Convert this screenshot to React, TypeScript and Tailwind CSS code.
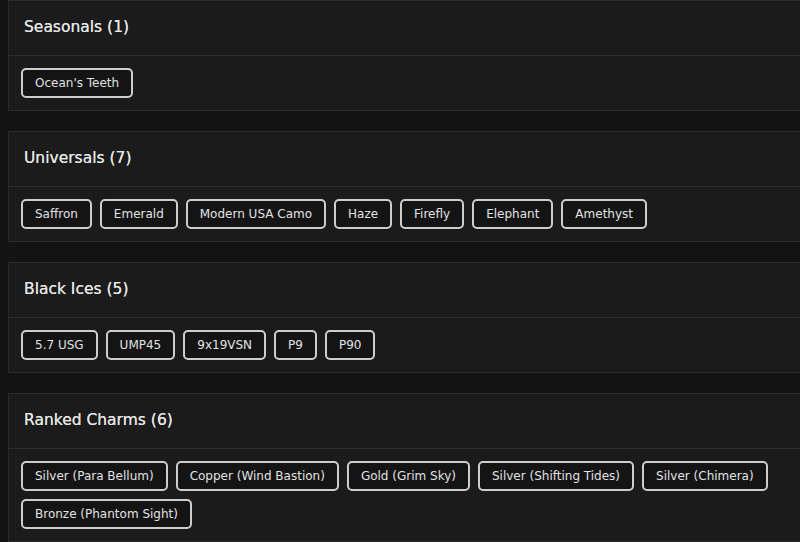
import React from 'react';

interface Group {
    title: string;
    items: string[];
}

const groups: Group[] = [
    { title: 'Seasonals', items: ["Ocean's Teeth"] },
    { title: 'Universals', items: ['Saffron', 'Emerald', 'Modern USA Camo', 'Haze', 'Firefly', 'Elephant', 'Amethyst'] },
    { title: 'Black Ices', items: ['5.7 USG', 'UMP45', '9x19VSN', 'P9', 'P90'] },
    {
        title: 'Ranked Charms',
        items: ['Silver (Para Bellum)', 'Copper (Wind Bastion)', 'Gold (Grim Sky)', 'Silver (Shifting Tides)', 'Silver (Chimera)', 'Bronze (Phantom Sight)'],
    },
];

const Card: React.FC<{ group: Group }> = ({ group }) => (
    <div className="w-[800px] bg-[#1b1b1b] border border-[#2b2b2b]">
        <div className="h-[55px] flex items-center px-[15px] border-b border-[#2e2e2e]">
            <h2 className="text-[15.5px] text-[#e6e6e6] [text-shadow:0_0_0.4px_#e6e6e6]">
                {group.title} ({group.items.length})
            </h2>
        </div>
        <div className="flex flex-wrap gap-x-[8px] gap-y-[8px] px-[12px] py-[12px]">
            {group.items.map(item => (
                <span
                    key={item}
                    className="h-[30px] flex items-center px-[12px] border-2 border-[#cdcdcd] rounded-[5px] bg-[#141414] text-[12px] text-[#e2e2e2]"
                >
                    {item}
                </span>
            ))}
        </div>
    </div>
);

export default function App() {
    return (
        <div
            className="w-full h-[542px] overflow-hidden bg-[#131313] pl-[8px] flex flex-col gap-[20px]"
            style={{ fontFamily: '"DejaVu Sans", "Noto Sans", sans-serif' }}
        >
            {groups.map(g => (
                <Card key={g.title} group={g} />
            ))}
        </div>
    );
}
